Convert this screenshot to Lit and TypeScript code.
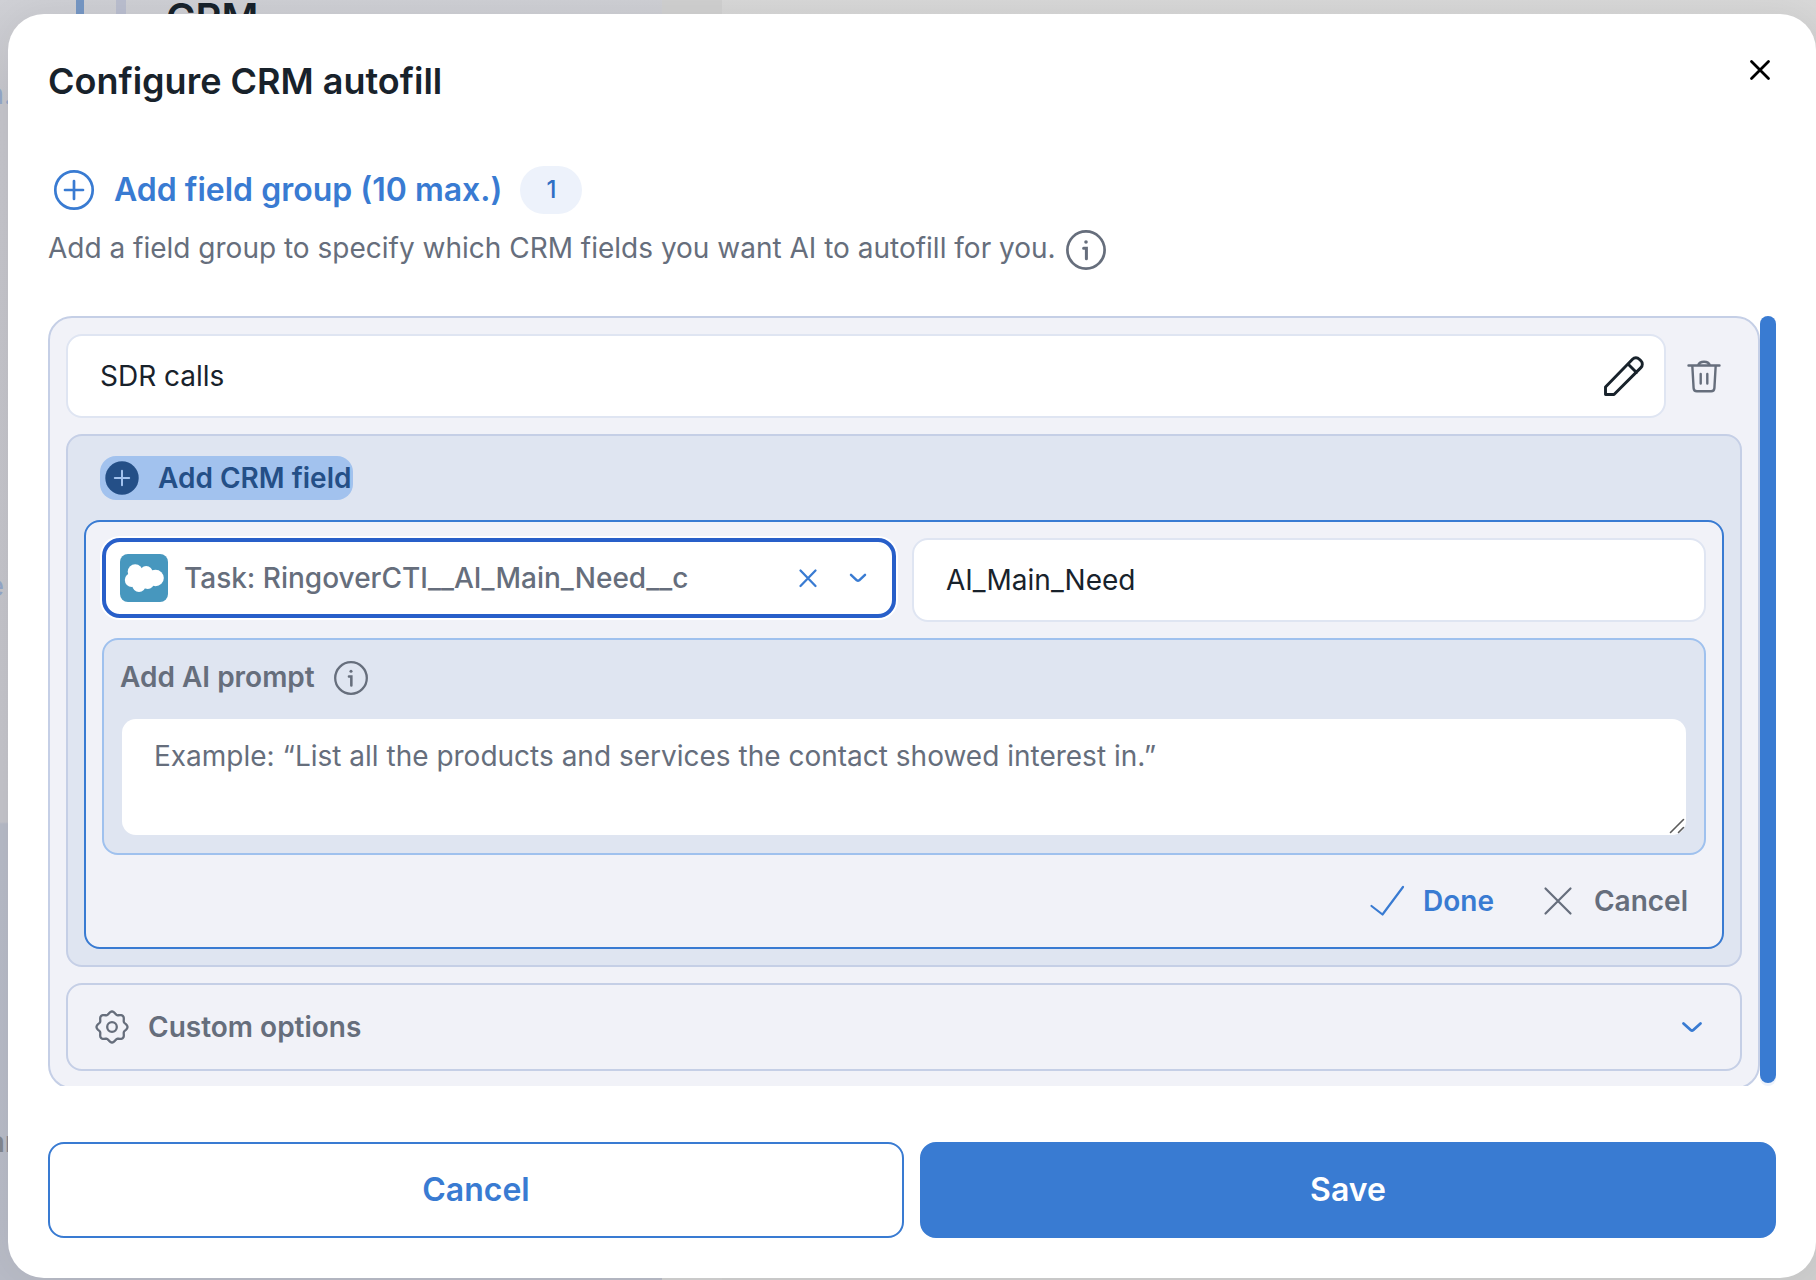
import { LitElement, html, css } from "lit";
import { customElement, state } from "lit/decorators.js";

/** Closed outline of an eight-lobed gear centred in a 36 unit box. */
const gearOutline = (): string => {
  const points: string[] = [];
  for (let i = 0; i < 96; i++) {
    const angle = (i / 96) * Math.PI * 2;
    const radius = 14.2 + 1.3 * Math.cos(angle * 8);
    points.push(`${(18 + radius * Math.cos(angle)).toFixed(2)} ${(18 + radius * Math.sin(angle)).toFixed(2)}`);
  }
  return `M${points.join("L")}Z`;
};

@customElement("app-root")
export class AppRoot extends LitElement {
  static styles = css`
    :host {
      display: block;
      position: relative;
      min-height: 100vh;
      overflow: hidden;
      box-sizing: border-box;
      padding: 14px 0 2px 8px;
      font-family: Inter, "Liberation Sans", sans-serif;
      font-size: 28px;
      line-height: 36px;
      color: #18222b;
      background: #cbcbcb;
    }
    *, *::before, *::after { box-sizing: border-box; }
    button, input, textarea, select { font: inherit; color: inherit; margin: 0; border: 0; padding: 0; background: none; outline: 0; }
    button { cursor: pointer; display: inline-flex; align-items: center; }
    svg { display: block; flex: none; fill: none; stroke: currentColor; stroke-width: 2; stroke-linecap: round; stroke-linejoin: round; }

    .backdrop { position: absolute; inset: 0; display: flex; }
    .side { width: 662px; background: linear-gradient(#cfd0d5 0, #c4c4ca 100px, #c3c3c9 822px, #b6bac6 824px, #b8bbc6 100%); }
    .strip { width: 60px; background: #d0d0d0; }
    .rest { flex: 1; background: linear-gradient(#d8d8d8, #d3d3d3 40px, #cecece); }
    .mark { position: absolute; top: 0; height: 20px; }
    .mark-a { left: 76px; width: 8px; background: #7697c4; }
    .mark-b { left: 116px; width: 10px; background: #babecf; }
    .under { position: absolute; margin: 0; white-space: nowrap; }
    .under-title { left: 166px; top: 0; font-size: 40px; font-weight: 600; }
    .under-a { right: calc(100% - 12px); top: 76px; color: #93a7c8; }
    .under-b { right: calc(100% - 4px); top: 568px; color: #93a7c8; }
    .under-c { right: calc(100% - 16px); top: 1124px; color: #82868f; font-weight: 600; }

    .modal {
      position: relative;
      display: flex;
      flex-direction: column;
      padding: 40px;
      background: #fff;
      border-radius: 36px;
      box-shadow: 0 0 40px rgba(0, 0, 0, 0.06);
    }
    .head { display: flex; justify-content: space-between; align-items: flex-start; height: 112px; }
    h1 { margin: 3px 0 0; font-size: 36px; line-height: 48px; font-weight: 600; }
    .close { width: 32px; height: 32px; color: #000; }
    .add-group { align-self: flex-start; display: flex; align-items: center; gap: 18px; height: 48px; }
    .add-group button { gap: 16px; font-size: 32px; font-weight: 600; color: #397bd2; padding-left: 2px; }
    .badge { min-width: 62px; height: 48px; border-radius: 24px; display: grid; place-items: center; background: #edf2fb; color: #2f6fc4; font-size: 24px; font-weight: 500; }
    .hint { display: flex; align-items: flex-start; gap: 10px; margin: 16px 0 46px; color: #666e7c; }
    .hint p { margin: 0; }

    .scroller { display: flex; height: 770px; overflow: hidden; }
    .group { flex: 1; min-width: 0; align-self: flex-start; display: flex; flex-direction: column; gap: 16px; padding: 16px; border: 2px solid #c5cfe6; border-radius: 24px; background: #f1f2f8; }
    .track { width: 16px; border-radius: 8px; background: #edf2fb; padding-bottom: 3px; display: flex; }
    .thumb { flex: 1; border-radius: 8px; background: #397bd2; }

    .name-row { display: flex; align-items: center; }
    .field { display: flex; align-items: center; height: 84px; padding: 0 16px 0 32px; border: 2px solid #dfe5f2; border-radius: 16px; background: #fff; }
    .field input { flex: 1; min-width: 0; height: 100%; }
    .name-row .field { flex: 1; }
    .trash { width: 76px; justify-content: center; color: #666e7c; }

    .fields { border: 2px solid #c5cfe6; border-radius: 16px; background: #dfe5f1; padding: 20px 16px 16px; display: flex; flex-direction: column; gap: 20px; }
    .add-field { align-self: flex-start; margin-left: 16px; height: 44px; border-radius: 16px; padding: 0 2px 0 4px; gap: 18px; background: #a2c2ee; color: #244f87; font-weight: 600; }
    .editor { border: 2px solid #397bd2; border-radius: 16px; background: #f1f2f8; padding: 16px; display: flex; flex-direction: column; gap: 16px; }
    .pair { display: grid; grid-template-columns: 1fr 1fr; gap: 16px; align-items: start; }
    .picker { display: flex; align-items: center; height: 80px; border: 4px solid #285fc9; border-radius: 18px; box-shadow: 0 0 0 2px #fff; background: #fff; padding: 0 9px 0 14px; color: #666e7c; font-weight: 500; }
    .picker select { flex: 1; min-width: 0; height: 100%; appearance: none; padding-left: 16px; }
    .picker button, .picker .caret { width: 50px; justify-content: center; display: flex; color: #397bd2; }

    .prompt { border: 2px solid #9fc1ee; border-radius: 16px; background: #dfe5f1; padding: 17px 18px 18px 16px; }
    .prompt-head { display: flex; align-items: flex-start; gap: 19px; height: 46px; color: #666e7c; font-weight: 600; }
    .prompt-head label { padding-top: 2px; }
    .prompt-head svg { margin-top: 4px; }
    .prompt-box { position: relative; margin: 16px 0 0 2px; }
    .prompt-box svg { position: absolute; right: 0; bottom: 0; color: #5c5c5c; pointer-events: none; }
    textarea { display: block; width: 100%; height: 116px; padding: 19px 32px; border-radius: 14px; background: #fff; resize: none; }
    textarea::placeholder { color: #666e7c; opacity: 1; }
    .actions { display: flex; justify-content: flex-end; gap: 48px; padding: 12px 18px 12px 0; font-weight: 600; }
    .actions button { height: 36px; gap: 20px; }
    .actions .done { gap: 18px; color: #397bd2; }
    .drop { color: #666e7c; }

    .options { width: 100%; height: 88px; border: 2px solid #c5cfe6; border-radius: 16px; padding: 0 36px 0 26px; gap: 18px; color: #666e7c; font-weight: 600; }
    .options span { flex: 1; text-align: left; }
    .options .down { color: #397bd2; }

    .footer { display: grid; grid-template-columns: 1fr 1fr; gap: 16px; margin-top: 56px; }
    .footer button { height: 96px; justify-content: center; border-radius: 16px; border: 2px solid #397bd2; font-size: 32px; font-weight: 600; color: #397bd2; }
    .footer .save { background: #397bd2; color: #fff; }
  `;

  @state() private groupName = "SDR calls";
  @state() private fieldLabel = "AI_Main_Need";

  private info(size: number) {
    return html`<svg width=${size} height=${size} viewBox="0 0 40 40" aria-hidden="true">
      <circle cx="20" cy="20" r="18.6" stroke-width="2.7" />
      <path d="M17.6 18.2h2.800v10.600" stroke-width="3" stroke-linejoin="miter" />
      <circle cx="20" cy="12" r="1.800" fill="currentColor" stroke="none" />
    </svg>`;
  }

  render() {
    return html`
      <div class="backdrop" aria-hidden="true">
        <div class="side"></div><div class="strip"></div><div class="rest"></div>
        <i class="mark mark-a"></i><i class="mark mark-b"></i>
        <p class="under under-title">CRM</p>
        <p class="under under-a">n.</p>
        <p class="under under-b">e</p>
        <p class="under under-c">ar</p>
      </div>
      <section class="modal" role="dialog" aria-modal="true" aria-labelledby="title">
        <header class="head">
          <h1 id="title">Configure CRM autofill</h1>
          <button class="close" aria-label="Close">
            <svg width="32" height="32" viewBox="0 0 32 32"><path d="M7.500 7.500l17 17M24.500 7.500l-17 17" stroke-width="2.800" /></svg>
          </button>
        </header>
        <div class="add-group">
          <button>
            <svg width="48" height="48" viewBox="0 0 48 48"><circle cx="24" cy="24" r="18.700" stroke-width="2.700" /><path d="M24 15v18M15 24h18" stroke-width="2.700" /></svg>
            Add field group (10 max.)
          </button>
          <span class="badge">1</span>
        </div>
        <div class="hint">
          <p>Add a field group to specify which CRM fields you want AI to autofill for you.</p>
          ${this.info(40)}
        </div>

        <div class="scroller">
          <div class="group">
            <div class="name-row">
              <div class="field">
                <input aria-label="Group name" .value=${this.groupName} @input=${(e: Event) => (this.groupName = (e.target as HTMLInputElement).value)} />
                <svg width="48" height="48" viewBox="0 0 48 48"><path d="M5.500 42.500v-7.500L32.500 7.200a4.800 4.800 0 0 1 6.800 0l1.600 1.600a4.800 4.800 0 0 1 0 6.800L14 42.500zM28 12l8.500 8.500" stroke-width="2.900"/></svg>
              </div>
              <button class="trash" aria-label="Delete group">
                <svg width="40" height="40" viewBox="0 0 40 40"><path stroke-width="2.400" d="M4.500 9.500h31M8.300 9.500l1.300 22.600a3.300 3.300 0 0 0 3.300 3.100h14.200a3.300 3.300 0 0 0 3.300-3.100L31.700 9.500M14 9.500a6.300 5.300 0 0 1 12 0M16.700 18v9.500M23.300 18v9.500" /></svg>
              </button>
            </div>

            <div class="fields">
              <button class="add-field">
                <svg width="36" height="36" viewBox="0 0 36 36"><circle cx="18" cy="18" r="16.700" fill="currentColor" stroke="none" /><path d="M18 10.800v14.400M10.800 18h14.400" stroke="#a2c2ee" /></svg>
                Add CRM field
              </button>
              <div class="editor">
                <div class="pair">
                  <div class="picker">
                    <svg width="48" height="48" viewBox="0 0 48 48" aria-hidden="true">
                      <rect width="48" height="48" rx="8" fill="#4797be" stroke="none" />
                      <g fill="#fff" stroke="none">
                        <circle cx="15.200" cy="17.700" r="7.500" />
                        <circle cx="26.200" cy="18.500" r="6.500" />
                        <circle cx="35.500" cy="24" r="8.300" />
                        <circle cx="11.800" cy="26" r="7" />
                        <circle cx="19" cy="31.200" r="6.700" />
                        <circle cx="27.700" cy="28.500" r="6.500" />
                        <path d="M12 17h17v14H12z" />
                      </g>
                    </svg>
                    <select aria-label="CRM field"><option>Task: RingoverCTI__AI_Main_Need__c</option></select>
                    <button aria-label="Clear field"><svg width="24" height="24" viewBox="0 0 24 24"><path d="M4.500 4.500l15 15.500M19.500 4.500L4.500 20" stroke-width="2.300" /></svg></button>
                    <span class="caret"><svg width="24" height="24" viewBox="0 0 24 24"><path d="M5 8.800l5.800 5.500a2 2 0 0 0 2.400 0L19 8.800" stroke-width="2.500" /></svg></span>
                  </div>
                  <div class="field">
                    <input aria-label="Field label" .value=${this.fieldLabel} @input=${(e: Event) => (this.fieldLabel = (e.target as HTMLInputElement).value)} />
                  </div>
                </div>
                <div class="prompt">
                  <div class="prompt-head"><label for="prompt">Add AI prompt</label>${this.info(34)}</div>
                  <div class="prompt-box">
                    <textarea id="prompt" placeholder="Example: “List all the products and services the contact showed interest in.”"></textarea>
                    <svg width="18" height="18" viewBox="0 0 18 18" aria-hidden="true"><path d="M2.500 15.500l13-13M10.500 15.500l5-5" stroke-width="1.600" /></svg>
                  </div>
                </div>
                <div class="actions">
                  <button class="done"><svg width="36" height="36" viewBox="0 0 36 36"><path d="M2.500 23l11 8.500L34 4" stroke-width="2.200" /></svg>Done</button>
                  <button class="drop"><svg width="32" height="32" viewBox="0 0 32 32"><path d="M3.500 3.500l25 25M28.500 3.500l-25 25" stroke-width="2.200" /></svg>Cancel</button>
                </div>
              </div>
            </div>

            <button class="options">
              <svg width="36" height="36" viewBox="0 0 36 36"><path d=${gearOutline()} stroke-width="2.300" /><circle cx="18" cy="18" r="4.800" stroke-width="2.300" /></svg>
              <span>Custom options</span>
              <svg class="down" width="24" height="24" viewBox="0 0 24 24"><path d="M3.500 8.500l7.200 6.500a2 2 0 0 0 2.600 0l7.200-6.500" stroke-width="2.800" /></svg>
            </button>
          </div>
          <div class="track"><div class="thumb"></div></div>
        </div>

        <footer class="footer">
          <button>Cancel</button>
          <button class="save">Save</button>
        </footer>
      </section>
    `;
  }
}
